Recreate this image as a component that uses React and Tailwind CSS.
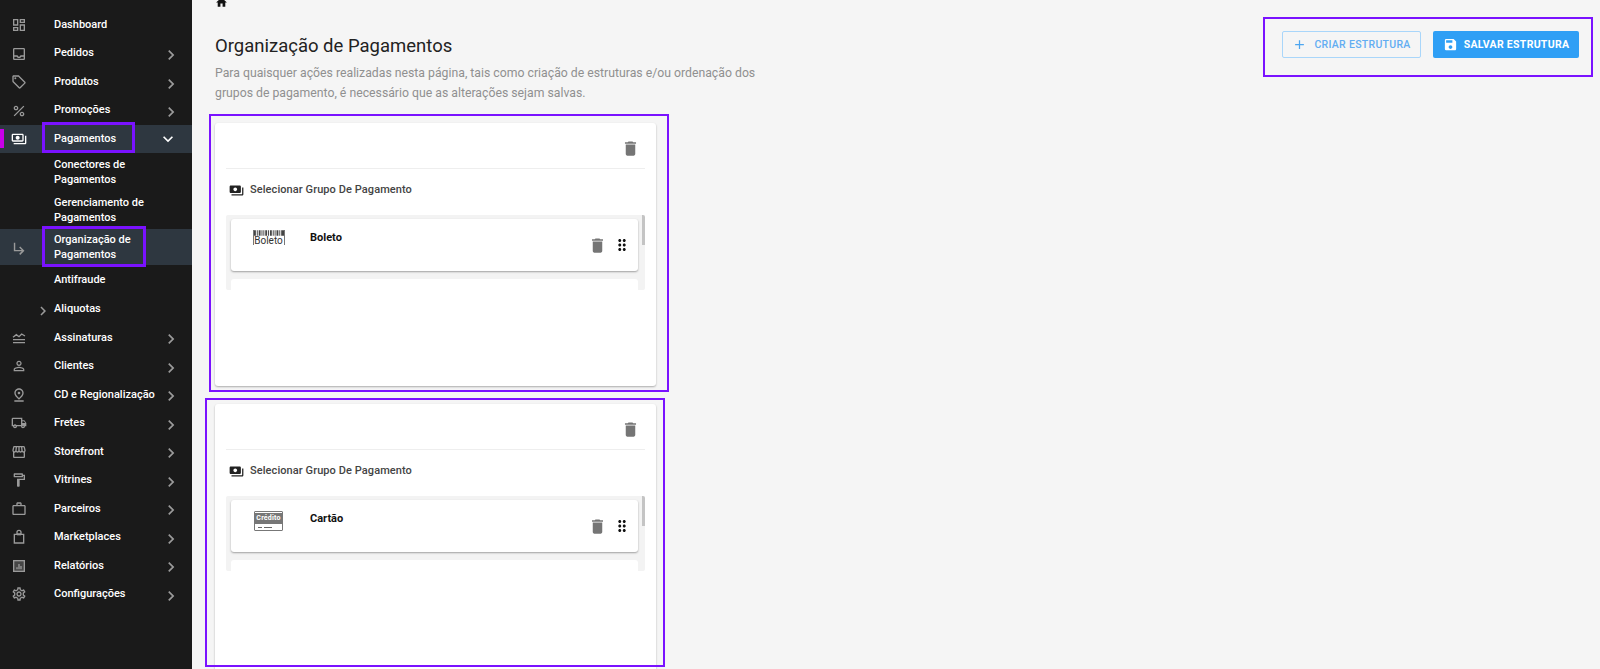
import {
  MdOutlineDashboard, MdOutlineInbox, MdOutlineLocalOffer, MdPercent, MdOutlinePayments,
  MdSubdirectoryArrowRight, MdOutlinePersonOutline, MdOutlinePinDrop,
  MdOutlineLocalShipping, MdOutlineStorefront, MdOutlineFormatPaint, MdWorkOutline,
  MdOutlineSettings, MdChevronRight, MdExpandMore,
  MdDelete, MdDragIndicator, MdSave, MdAdd, MdHome, MdPayments
} from 'react-icons/md'

// Icons the packages don't have in this shape
const WavesIcon = ({ size, className }) => (
  <svg width={size} height={size} viewBox="0 0 24 24" fill="none" stroke="currentColor" strokeWidth="2" className={className}>
    <path d="M3 11l5-4 4 3 4-4 5 3" />
    <path d="M3 14.5h18M3 19h18" />
  </svg>
)

const BagIcon = ({ size, className }) => (
  <svg width={size} height={size} viewBox="0 0 24 24" fill="none" stroke="currentColor" strokeWidth="2" className={className}>
    <path d="M5 8h14v13H5z" />
    <path d="M9 8V5a3 3 0 0 1 6 0v3" />
    <path d="M9 8h6" strokeWidth="3" />
  </svg>
)

const ReportIcon = ({ size, className }) => (
  <svg width={size} height={size} viewBox="0 0 24 24" className={className}>
    <rect x="4" y="4" width="16" height="16" fill="currentColor" fillOpacity="0.35" stroke="currentColor" strokeWidth="2" />
    <path d="M8 17v-3h2v3zM11 17V9h2v8zM14 17v-5h2v5z" fill="currentColor" />
  </svg>
)

const topItems = [
  { label: 'Dashboard', icon: MdOutlineDashboard, noArrow: true },
  { label: 'Pedidos', icon: MdOutlineInbox },
  { label: 'Produtos', icon: MdOutlineLocalOffer },
  { label: 'Promoções', icon: MdPercent }
]

const bottomItems = [
  { label: 'Assinaturas', icon: WavesIcon },
  { label: 'Clientes', icon: MdOutlinePersonOutline },
  { label: 'CD e Regionalização', icon: MdOutlinePinDrop },
  { label: 'Fretes', icon: MdOutlineLocalShipping },
  { label: 'Storefront', icon: MdOutlineStorefront },
  { label: 'Vitrines', icon: MdOutlineFormatPaint },
  { label: 'Parceiros', icon: MdWorkOutline },
  { label: 'Marketplaces', icon: BagIcon },
  { label: 'Relatórios', icon: ReportIcon },
  { label: 'Configurações', icon: MdOutlineSettings }
]

const NavRow = ({ label, icon: Icon, noArrow }) => (
  <div className="flex h-[28.5px] items-center">
    <div className="flex w-[54px] shrink-0 pl-[11px]">
      <Icon size={16} className="text-[#9a9a9a]" />
    </div>
    <span className="flex-1 text-[11px] font-medium text-white">{label}</span>
    {!noArrow && <MdChevronRight size={20} className="mr-[11px] mt-[3px] text-[#9a9a9a]" />}
  </div>
)

const SubLink = ({ children }) => (
  <div className="flex h-[37.5px] items-center pl-[54px] pr-6 text-[11px] font-medium leading-[15px] text-white">
    {children}
  </div>
)

// Purple marker drawn over the screenshot
const Marker = ({ className }) => (
  <div className={`pointer-events-none absolute border-[#7a12ff] ${className}`} />
)

const Sidebar = () => (
  <aside className="h-full w-[192px] shrink-0 bg-[#1a1a1a] pt-[10.75px]">
    {topItems.map(item => <NavRow key={item.label} {...item} />)}

    <div className="relative flex h-[28.5px] items-center bg-[#2e3740]">
      <div className="absolute left-0 top-[4px] h-[19px] w-[4px] bg-[#c800e8]" />
      <div className="flex w-[54px] shrink-0 pl-[11px]">
        <MdOutlinePayments size={16} className="text-white" />
      </div>
      <span className="flex-1 text-[11px] font-medium text-white">Pagamentos</span>
      <MdExpandMore size={20} className="mr-[14px] text-white" />
    </div>

    <SubLink>Conectores de Pagamentos</SubLink>
    <SubLink>Gerenciamento de Pagamentos</SubLink>

    <div className="mt-[0.75px] flex h-[36px] items-center bg-[#2e3740]">
      <div className="flex w-[54px] shrink-0 pl-[11px] pt-[3px]">
        <MdSubdirectoryArrowRight size={17} className="text-[#9a9a9a]" />
      </div>
      <span className="pr-6 text-[11px] font-medium leading-[15px] text-white">Organização de Pagamentos</span>
    </div>

    <div className="flex h-[29.5px] items-center pl-[54px] text-[11px] font-medium text-white">Antifraude</div>
    <div className="flex h-[29px] items-center">
      <div className="flex w-[54px] shrink-0 justify-end">
        <MdChevronRight size={18} className="mr-[2px] mt-[3px] text-[#9a9a9a]" />
      </div>
      <span className="text-[11px] font-medium text-white">Aliquotas</span>
    </div>

    {bottomItems.map(item => <NavRow key={item.label} {...item} />)}
  </aside>
)

const BoletoLogo = () => (
  <div className="flex h-[15px] w-[32px] flex-col overflow-hidden border-x border-[#777]">
    <svg viewBox="0 0 32 6" className="h-[6px] w-full shrink-0 text-[#444]" fill="currentColor">
      <path d="M0 0h2v6H0zM3 0h1v6H3zM5 0h2v6H5zM8 0h1v6H8zM10 0h1v6h-1zM12 0h2v6h-2zM15 0h1v6h-1zM17 0h2v6h-2zM20 0h1v6h-1zM22 0h1v6h-1zM24 0h2v6h-2zM27 0h1v6h-1zM29 0h3v6h-3z" />
    </svg>
    <span className="text-center text-[10px] leading-[9px] text-[#333]">Boleto</span>
  </div>
)

const CreditoLogo = () => (
  <div className="flex h-[20px] w-[29px] flex-col overflow-hidden rounded-[1px] border border-[#777] bg-white">
    <div className="mt-[1px] flex h-[11px] items-center justify-center bg-[#777]">
      <span className="text-[7px] font-bold leading-[9px] tracking-[0.2px] text-white">Crédito</span>
    </div>
    <div className="flex flex-1 items-center gap-[2px] pl-[3px]">
      <div className="h-[1px] w-[4px] bg-[#666]" />
      <div className="h-[1px] w-[8px] bg-[#666]" />
    </div>
  </div>
)

const GroupCard = ({ title, logo, cardClass }) => (
  <section className={`rounded-[3px] bg-white px-[11px] shadow-[0_1px_2px_rgba(0,0,0,0.3)] ${cardClass}`}>
    <div className="flex h-[46px] items-center justify-end border-b border-[#eeeeee] pr-[5px] pt-[6px]">
      <MdDelete size={19} className="text-[#757575]" />
    </div>
    <div className="flex h-[46px] items-center gap-[6px] pb-[3px] pl-[3px]">
      <MdPayments size={15} className="text-[#222]" />
      <span className="text-[11px] font-medium tracking-[0.08px] text-[#444]">Selecionar Grupo De Pagamento</span>
    </div>
    <div className="relative h-[75px] overflow-hidden rounded-[2px] bg-[#f3f3f3] pl-[5px] pr-[7px] pt-[4px]">
      <div className="absolute right-0 top-0 h-[30px] w-[3px] bg-[#c4c4c4]" />
      <div className="flex h-[52px] rounded-[3px] bg-white shadow-[0_1px_2px_rgba(0,0,0,0.35)]">
        <div className="flex w-[79px] shrink-0 justify-center pr-[4px] pt-[11px]">{logo}</div>
        <span className="flex-1 pt-[12px] text-[11px] font-bold leading-[14px] text-[#111]">{title}</span>
        <div className="flex items-center gap-[6px] pr-[7px]">
          <MdDelete size={19} className="text-[#757575]" />
          <MdDragIndicator size={18} className="text-[#111]" />
        </div>
      </div>
      <div className="mt-[8px] h-[20px] rounded-[3px] bg-white" />
    </div>
  </section>
)

const App = () => {
  return (
    <div className="relative flex h-[669px] w-[1600px] overflow-hidden bg-[#f5f5f5] font-['Roboto',sans-serif]">
      <Sidebar />

      <main className="min-w-0 flex-1 pl-[23px] pr-[21px]">
        <MdHome size={13} className="-mt-[4px] text-[#111]" />

        <div className="flex justify-between pt-[25px]">
          <div>
            <h1 className="text-[18.5px] font-normal leading-[24px] text-[#222]">Organização de Pagamentos</h1>
            <p className="mt-[6px] w-[560px] text-[12.25px] leading-[19.5px] text-[#909090]">
              Para quaisquer ações realizadas nesta página, tais como criação de estruturas e/ou ordenação dos grupos de pagamento, é necessário que as alterações sejam salvas.
            </p>
          </div>
          <div className="-mt-[3px] flex h-[27px] gap-3">
            <button className="flex w-[139px] items-center justify-center gap-[7px] rounded-[2px] border border-[#a9d6fa] text-[10.5px] font-medium tracking-[0.3px] text-[#62adf2]">
              <MdAdd size={15} className="text-[#4da6f0]" />
              CRIAR ESTRUTURA
            </button>
            <button className="flex w-[146px] items-center justify-center gap-[6px] rounded-[2px] bg-[#2f9ff5] text-[10.5px] font-bold tracking-[0.3px] text-white">
              <MdSave size={15} />
              SALVAR ESTRUTURA
            </button>
          </div>
        </div>

        <div className="mt-[20px] flex w-[441px] flex-col gap-[18px]">
          <GroupCard title="Boleto" logo={<BoletoLogo />} cardClass="h-[263px]" />
          <GroupCard title="Cartão" logo={<CreditoLogo />} cardClass="h-[280px]" />
        </div>
      </main>

      <Marker className="left-[42px] top-[122px] h-[31px] w-[93px] border-[3px]" />
      <Marker className="left-[42px] top-[226px] h-[41px] w-[104px] border-[3px]" />
      <Marker className="left-[1263px] top-[17px] h-[60px] w-[330px] border-2" />
      <Marker className="left-[209px] top-[114px] h-[278px] w-[460px] border-2" />
      <Marker className="left-[205px] top-[398px] h-[269px] w-[460px] border-2" />
    </div>
  )
}

export default App
